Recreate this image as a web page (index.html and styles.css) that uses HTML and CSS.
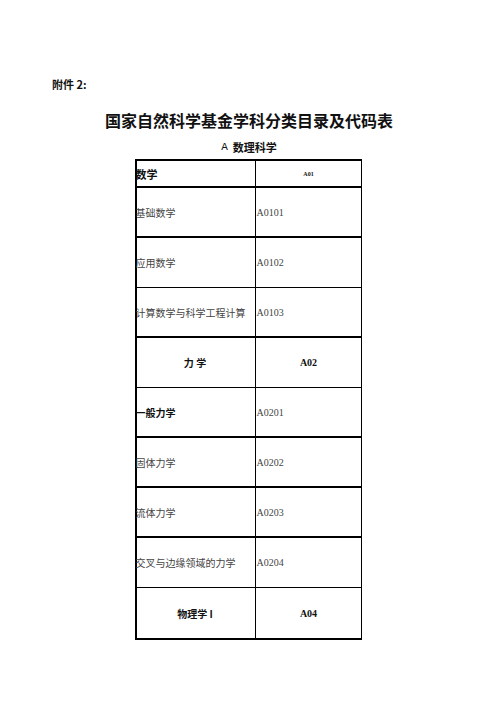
FILE: index.html
```html
<!DOCTYPE html>
<html lang="zh">
<head>
<meta charset="utf-8">
<title>国家自然科学基金学科分类目录及代码表</title>
<link rel="stylesheet" href="styles.css">
</head>
<body>
<div class="page">
  <p class="note">附件 2:</p>
  <h1 class="title">国家自然科学基金学科分类目录及代码表</h1>
  <p class="subtitle"><span class="latin">A</span> 数理科学</p>
  <div class="table">
    <div class="row head thick">
      <div class="name bold">数学</div>
      <div class="code tiny">A01</div>
    </div>
    <div class="row thick">
      <div class="name">基础数学</div>
      <div class="code">A0101</div>
    </div>
    <div class="row thin">
      <div class="name">应用数学</div>
      <div class="code">A0102</div>
    </div>
    <div class="row thick">
      <div class="name">计算数学与科学工程计算</div>
      <div class="code">A0103</div>
    </div>
    <div class="row thin">
      <div class="name center bold">力 学</div>
      <div class="code center bold">A02</div>
    </div>
    <div class="row thick">
      <div class="name bold">一般力学</div>
      <div class="code">A0201</div>
    </div>
    <div class="row thick">
      <div class="name">固体力学</div>
      <div class="code">A0202</div>
    </div>
    <div class="row thick">
      <div class="name">流体力学</div>
      <div class="code">A0203</div>
    </div>
    <div class="row thin">
      <div class="name">交叉与边缘领域的力学</div>
      <div class="code">A0204</div>
    </div>
    <div class="row thick last">
      <div class="name center bold">物理学 I</div>
      <div class="code center bold">A04</div>
    </div>
  </div>
</div>
</body>
</html>
```

FILE: styles.css
```css
* { box-sizing: border-box; }
html, body { margin: 0; padding: 0; background: #fff; }
body {
  width: 496px;
  font-family: "Noto Sans CJK SC", "Noto Sans", sans-serif;
  color: #111;
}
.page { padding-top: 77px; }
.note {
  margin: 0;
  padding-left: 52px;
  font-size: 11px;
  line-height: 14px;
  height: 14px;
  font-weight: 700;
}
.title {
  margin: 19px 0 0;
  text-align: center;
  font-size: 16px;
  line-height: 20px;
  height: 20px;
  font-weight: 700;
  padding-left: 2px;
}
.subtitle {
  margin: 10px 0 0;
  display: flex;
  justify-content: center;
  align-items: center;
  gap: 5px;
  font-size: 11px;
  line-height: 14px;
  height: 14px;
  font-weight: 700;
  padding-left: 2px;
}
.subtitle .latin {
  font-family: "Liberation Mono", monospace;
  font-weight: 400;
  font-size: 11px;
  line-height: 14px;
}
.table {
  margin: 5px auto 0;
  width: 227px;
  border-top: 2px solid #000;
  border-left: 2px solid #000;
  border-right: 1px solid #000;
}
.row {
  display: grid;
  grid-template-columns: 119px 1fr;
  height: 50px;
}
.row.head { height: 27px; }
.row.thick { border-bottom: 2px solid #000; }
.row.thin { border-bottom: 1px solid #000; }
.row.last { height: 52px; }
.name, .code {
  display: flex;
  align-items: center;
  font-size: 10px;
  color: #444;
  white-space: nowrap;
  overflow: hidden;
}
.name {
  border-right: 1px solid #000;
  margin-left: -1px;
}
.code {
  font-family: "Liberation Serif", serif;
  padding-left: 1px;
}
.bold { font-weight: 700; color: #111; }
.center { justify-content: center; }
.head .name { font-size: 11px; }
.tiny {
  justify-content: center;
  font-size: 6px;
  font-weight: 700;
  color: #111;
}
```
